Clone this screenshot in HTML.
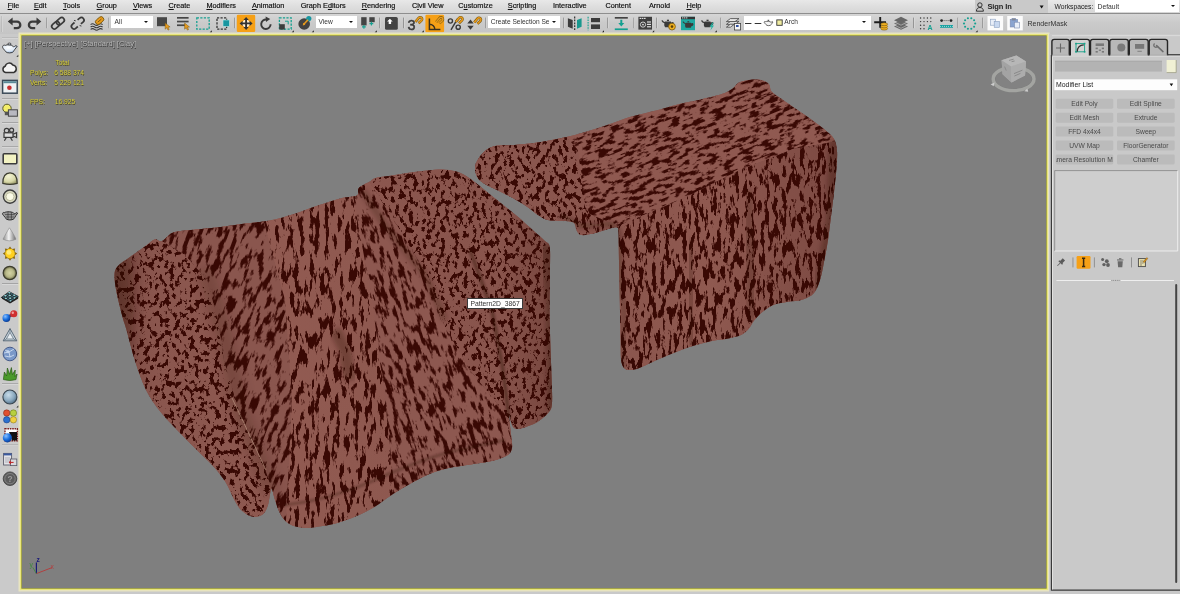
<!DOCTYPE html>
<html lang="en">
<head>
<meta charset="utf-8">
<title>3ds Max</title>
<style>
*{box-sizing:border-box;margin:0;padding:0}
html,body{width:1180px;height:594px;overflow:hidden;background:#c9c9c9;font-family:"Liberation Sans",sans-serif;font-size:7.3px;color:#1e1e1e}
#app{position:absolute;left:0;top:0;width:1180px;height:594px;overflow:hidden;filter:blur(.35px);will-change:transform;transform:translateZ(0)}
.abs{position:absolute}
/* menu bar */
#menubar{position:absolute;left:0;top:0;width:1180px;height:14px;background:linear-gradient(#e8e8e8,#dedede 50%,#d6d6d6);border-bottom:.9px solid #8e8e8e}
#menubar span.m{position:absolute;top:1.1px;height:10px;line-height:10px;white-space:nowrap;font-size:7.3px;color:#111;-webkit-text-stroke:.18px #111}
#menubar span.m u{text-decoration-thickness:.6px;text-underline-offset:.6px}
#signin{position:absolute;left:975px;top:0;width:73px;height:12.5px;background:#c9c9c9}
#ws{position:absolute;left:1094.5px;top:0;width:84px;height:12px;background:#fff}
/* toolbar */
#toolbar{position:absolute;left:0;top:14px;width:1180px;height:20px;background:linear-gradient(#d6d6d6,#cacaca 45%,#c5c5c5)}
.sep{position:absolute;top:3px;width:1px;height:13px;background:#8e8e8e}
.dd{position:absolute;background:#fff;height:12.2px;top:2.2px;font-size:6.6px;line-height:12.2px;color:#333;white-space:nowrap;overflow:hidden}
.dd i{position:absolute;right:3px;top:4.8px;width:0;height:0;border-left:2px solid transparent;border-right:2px solid transparent;border-top:2.7px solid #111}
.ic{position:absolute;top:0;height:20px}
/* viewport */
#vp{position:absolute;left:22.4px;top:35.6px;width:1023.4px;height:552.8px;background:#7f7f7f;box-shadow:0 0 0 .7px #85873a, 0 0 0 1.9px #eae774, 0 0 0 3.5px #e8e4c0}
/* left tool strip */
#strip{position:absolute;left:0;top:34px;width:20.5px;height:560px;background:#cacaca}
/* command panel */
#panel{position:absolute;left:1048.5px;top:34px;width:131.5px;height:560px;background:#c9c9c9}
.pbtn{position:absolute;height:10px;line-height:10.2px;font-size:6.7px;color:#4a4a4a;display:flex;justify-content:center;white-space:nowrap;overflow:hidden}
.vl,.vs{position:absolute;white-space:nowrap;line-height:9px;text-shadow:.5px .5px 0 #3a3a3a,-.4px -.4px 0 #555}
.vs{font-size:6.7px;color:#d8d046;text-shadow:.5px .5px 0 #4a4620,-.3px -.3px 0 #5a5630}
</style>
</head>
<body>
<div id="app">

<div id="menubar">
<span class="m" style="left:7.6px"><u>F</u>ile</span>
<span class="m" style="left:33.9px"><u>E</u>dit</span>
<span class="m" style="left:63px"><u>T</u>ools</span>
<span class="m" style="left:96.6px"><u>G</u>roup</span>
<span class="m" style="left:132.9px"><u>V</u>iews</span>
<span class="m" style="left:168.5px"><u>C</u>reate</span>
<span class="m" style="left:206.4px"><u>M</u>odifiers</span>
<span class="m" style="left:251.9px"><u>A</u>nimation</span>
<span class="m" style="left:300.7px">Graph E<u>d</u>itors</span>
<span class="m" style="left:361.7px"><u>R</u>endering</span>
<span class="m" style="left:411.9px">C<u>i</u>vil View</span>
<span class="m" style="left:458.3px">C<u>u</u>stomize</span>
<span class="m" style="left:507.8px"><u>S</u>cripting</span>
<span class="m" style="left:553px">Interactive</span>
<span class="m" style="left:605.4px">Content</span>
<span class="m" style="left:649px">Arnold</span>
<span class="m" style="left:686.4px"><u>H</u>elp</span>
<div id="signin"><svg class="abs" style="left:0;top:0" width="73" height="13" viewBox="0 0 73 13"><circle cx="4.9" cy="5" r="2.2" fill="none" stroke="#222" stroke-width=".9"/><path d="M1.4 11.2c0-2.4 1.5-3.7 3.5-3.7s3.5 1.3 3.5 3.7z" fill="none" stroke="#222" stroke-width=".9"/><path d="M64.6 5.6l4 0l-2 2.8z" fill="#111"/></svg><span class="abs" style="left:12.4px;top:2px;line-height:10px;font-size:7.5px;font-weight:bold;color:#222;white-space:nowrap;letter-spacing:-.1px">Sign In</span></div>
<span class="abs" style="left:1054.4px;top:2.2px;line-height:10px;font-size:6.75px;color:#222;white-space:nowrap">Workspaces:</span>
<div id="ws"><span class="abs" style="left:3px;top:2.1px;line-height:10px;font-size:6.8px;color:#333">Default</span><i class="abs" style="right:3.6px;top:5.4px;width:0;height:0;border-left:2px solid transparent;border-right:2px solid transparent;border-top:2.7px solid #111"></i></div>
</div>

<div id="toolbar">
<div class="dd" style="left:111.2px;width:42px;padding-left:3.4px">All<i style="right:5px"></i></div>
<div class="dd" style="left:316px;width:41px;padding-left:2.6px">View<i style="right:4px"></i></div>
<div class="dd" style="left:487.8px;width:72.5px;padding-left:3px">Create Selection Se<i style="right:4.6px"></i></div>
<div class="dd" style="left:743.5px;width:127.3px;height:13.4px;padding-left:40.8px">Arch<i style="right:5px"></i></div>
<div class="abs" style="left:1027.5px;top:4.3px;font-size:7px;line-height:12px;color:#333;white-space:nowrap">RenderMask</div>
</div>
<!--TB-->
<svg id="tbicons" class="abs" style="left:0;top:0" width="1180" height="34" viewBox="0 0 1180 34">
<rect x="1.6" y="16" width=".8" height="16" fill="#a9a9a9"/><rect x="2.4" y="16" width=".6" height="16" fill="#e4e4e4"/>
<g fill="none" stroke="#3a3a3a" stroke-width="2.3" stroke-linecap="butt"><path d="M11 21.6H17A3.3 3.3 0 0 1 17 28.2H13.8"/><path d="M38.2 21.6H32.2A3.3 3.3 0 0 0 32.2 28.2H35.2"/></g>
<path d="M7.8 21.6l4.8 -4v8z" fill="#3a3a3a"/><path d="M41.3 21.6l-4.8 -4v8z" fill="#3a3a3a"/>
<rect x="46.3" y="17.6" width=".9" height="10.6" fill="#8f8f8f"/><rect x="47.199999999999996" y="17.6" width=".6" height="10.6" fill="#dedede"/>
<rect x="108.4" y="17.6" width=".9" height="10.6" fill="#8f8f8f"/><rect x="109.30000000000001" y="17.6" width=".6" height="10.6" fill="#dedede"/>
<rect x="234.2" y="17.6" width=".9" height="10.6" fill="#8f8f8f"/><rect x="235.1" y="17.6" width=".6" height="10.6" fill="#dedede"/>
<rect x="379.0" y="17.6" width=".9" height="10.6" fill="#8f8f8f"/><rect x="379.9" y="17.6" width=".6" height="10.6" fill="#dedede"/>
<rect x="403.1" y="17.6" width=".9" height="10.6" fill="#8f8f8f"/><rect x="404.0" y="17.6" width=".6" height="10.6" fill="#dedede"/>
<rect x="485.0" y="17.6" width=".9" height="10.6" fill="#8f8f8f"/><rect x="485.9" y="17.6" width=".6" height="10.6" fill="#dedede"/>
<rect x="563.2" y="17.6" width=".9" height="10.6" fill="#8f8f8f"/><rect x="564.1" y="17.6" width=".6" height="10.6" fill="#dedede"/>
<rect x="607.2" y="17.6" width=".9" height="10.6" fill="#8f8f8f"/><rect x="608.1" y="17.6" width=".6" height="10.6" fill="#dedede"/>
<rect x="633.4" y="17.6" width=".9" height="10.6" fill="#8f8f8f"/><rect x="634.3" y="17.6" width=".6" height="10.6" fill="#dedede"/>
<rect x="656.0" y="17.6" width=".9" height="10.6" fill="#8f8f8f"/><rect x="656.9" y="17.6" width=".6" height="10.6" fill="#dedede"/>
<rect x="720.3" y="17.6" width=".9" height="10.6" fill="#8f8f8f"/><rect x="721.1999999999999" y="17.6" width=".6" height="10.6" fill="#dedede"/>
<rect x="913.1" y="17.6" width=".9" height="10.6" fill="#8f8f8f"/><rect x="914.0" y="17.6" width=".6" height="10.6" fill="#dedede"/>
<rect x="957.4" y="17.6" width=".9" height="10.6" fill="#8f8f8f"/><rect x="958.3" y="17.6" width=".6" height="10.6" fill="#dedede"/>
<rect x="982.2" y="17.6" width=".9" height="10.6" fill="#8f8f8f"/><rect x="983.1" y="17.6" width=".6" height="10.6" fill="#dedede"/>
<g transform="translate(58 23.2) rotate(-40)" fill="none" stroke="#3a3a3a" stroke-width="1.7"><rect x="-7.4" y="-2.6" width="8.6" height="5.2" rx="2.6"/><rect x="-1.2" y="-2.6" width="8.6" height="5.2" rx="2.6"/></g>
<g transform="translate(77.7 23.2) rotate(-40)" fill="none" stroke="#3a3a3a" stroke-width="1.7"><path d="M-2 -2.6H-4.8A2.6 2.6 0 0 0 -4.8 2.6H-2"/><path d="M2 -2.6H4.8A2.6 2.6 0 0 1 4.8 2.6H2"/><path d="M-1 -4.6L0 -3M1 4.6L0 3" stroke-width=".9"/></g>
<g fill="none" stroke="#3a3a3a" stroke-width="1.1"><path d="M90.6 24.6q2-1.6 4 0t4 0t4 0"/><path d="M90.6 27q2-1.6 4 0t4 0t4 0"/><path d="M90.6 29.4q2-1.6 4 0t4 0t4 0"/></g>
<g transform="translate(99.6 20.6) rotate(-40)"><rect x="-4.6" y="-2.6" width="9.2" height="5.2" rx="2.6" fill="#e89a1c" stroke="#7a5a10" stroke-width=".9"/><path d="M-2.4 0H2.4" stroke="#7a5a10" stroke-width=".9"/></g>
<rect x="157" y="17.2" width="10" height="9" fill="#464646"/><path d="M165.2 23l0 6.2l1.6 -1.5l1.2 2.4l1.2 -.6l-1.2 -2.3l2.1 -.2z" fill="#e89a1c" stroke="#7a5a10" stroke-width=".5"/>
<g fill="#464646"><rect x="177" y="17" width="11.6" height="1.7"/><rect x="177" y="20.7" width="11.6" height="1.7"/><rect x="177" y="24.4" width="8" height="1.7"/></g><path d="M184.6 23l0 6.2l1.6 -1.5l1.2 2.4l1.2 -.6l-1.2 -2.3l2.1 -.2z" fill="#e89a1c" stroke="#7a5a10" stroke-width=".5"/>
<rect x="196.8" y="17.9" width="12.4" height="11.2" fill="none" stroke="#14a090" stroke-width="1.3" stroke-dasharray="2.2 1.3"/><path d="M209.6 32.4l2.2 0l0 -2.2z" fill="#222"/>
<rect x="217" y="17.9" width="9.6" height="11.2" fill="none" stroke="#333" stroke-width="1.3" stroke-dasharray="2.2 1.3"/><rect x="223" y="20" width="6.4" height="6.4" fill="#1896a0" stroke="#bfe8e6" stroke-width=".6"/>
<rect x="236.8" y="14.8" width="18.4" height="17.2" rx="1.2" fill="#f6a016"/>
<path d="M246.1 18.2l5.2 5.2l-5.2 5.2l-5.2-5.2z" fill="#fff6e4" opacity=".92"/><g stroke="#333" stroke-width="1.9" fill="#333"><path d="M241.8 23.4H250.4M246.1 19V27.8" fill="none"/><path d="M239.6 23.4l3-2.7v5.4zM252.6 23.4l-3-2.7v5.4zM246.1 16.9l-2.7 3h5.4zM246.1 29.9l-2.7-3h5.4z" stroke="none"/></g>
<path d="M270.6 24.2A4.7 4.7 0 1 1 266.6 19.6" fill="none" stroke="#3a3a3a" stroke-width="1.9"/><path d="M265.6 16.4l4.6 2.6l-4.2 3z" fill="#3a3a3a"/>
<rect x="279.4" y="17.9" width="11.8" height="11.2" fill="none" stroke="#14a090" stroke-width="1.3" stroke-dasharray="2.2 1.3"/><rect x="279.2" y="24.2" width="5.6" height="5.4" fill="#3c3c3c"/><path d="M285 21.2h3.2v3.2" fill="none" stroke="#14a090" stroke-width="1"/><path d="M291.6 32.4l2.2 0l0 -2.2z" fill="#222"/>
<circle cx="304.2" cy="24" r="5.8" fill="#424242"/><circle cx="308.8" cy="18.6" r="2.6" fill="#1896a0"/><path d="M303.6 24.6L308 19.8" stroke="#e89a1c" stroke-width="1.5"/><path d="M302.8 25.6l.4-2.8l2.2 2z" fill="#e89a1c"/><path d="M311.6 32.4l2.2 0l0 -2.2z" fill="#222"/>
<rect x="361.2" y="17.2" width="5.4" height="8.2" fill="#444"/><rect x="369.3" y="17.2" width="5.4" height="5" fill="#444"/><path d="M362 26.9h3.8M363.9 25v3.8M369.5 23.6h3.8M371.4 21.7v3.8" stroke="#14a090" stroke-width="1.1"/><path d="M374.6 32.4l2.2 0l0 -2.2z" fill="#222"/>
<rect x="385" y="17" width="12.8" height="12.8" rx="1.6" fill="#444"/><path d="M389.9 18.8l2.8 2.6h-1.6v2.6h-2.4v-2.6h-1.6z" fill="#fff"/>
<text x="407.6" y="29.6" font-size="14.4" stroke="#3a3a3a" stroke-width=".5" fill="#3a3a3a" font-family="Liberation Sans,sans-serif">3</text><g transform="translate(414.6 15.6)"><path d="M0.8 6.2L4.2 2.2A1.9 1.9 0 0 1 7 4.8L4 7.6" fill="none" stroke="#7a5a10" stroke-width="2.6" stroke-linecap="butt"/><path d="M0.8 6.2L4.2 2.2A1.9 1.9 0 0 1 7 4.8L4 7.6" fill="none" stroke="#e89a1c" stroke-width="1.5"/></g><path d="M421.6 32.4l2.2 0l0 -2.2z" fill="#222"/>
<rect x="425.4" y="14.8" width="18.7" height="17.4" rx="1.2" fill="#f6a016"/>
<path d="M429.4 18.6V29.6H440.4M429.4 24.2A5.4 5.4 0 0 1 434.9 29.6" fill="none" stroke="#3a3020" stroke-width="1.5"/><g transform="translate(435.4 15.8)"><path d="M0.8 6.2L4.2 2.2A1.9 1.9 0 0 1 7 4.8L4 7.6" fill="none" stroke="#7a5a10" stroke-width="2.6" stroke-linecap="butt"/><path d="M0.8 6.2L4.2 2.2A1.9 1.9 0 0 1 7 4.8L4 7.6" fill="none" stroke="#e89a1c" stroke-width="1.5"/></g>
<g fill="none" stroke="#3a3a3a" stroke-width="1.4"><circle cx="450.4" cy="21" r="2.1"/><circle cx="458.2" cy="27.2" r="2.1"/><path d="M457.6 18.6L451 29.8"/></g><g transform="translate(455 15.6)"><path d="M0.8 6.2L4.2 2.2A1.9 1.9 0 0 1 7 4.8L4 7.6" fill="none" stroke="#7a5a10" stroke-width="2.6" stroke-linecap="butt"/><path d="M0.8 6.2L4.2 2.2A1.9 1.9 0 0 1 7 4.8L4 7.6" fill="none" stroke="#e89a1c" stroke-width="1.5"/></g>
<path d="M470.5 19.4l3.2 4h-6.4zM470.5 29.8l3.2-4h-6.4z" fill="#3a3a3a"/><g transform="translate(473.4 16.2)"><path d="M0.8 6.2L4.2 2.2A1.9 1.9 0 0 1 7 4.8L4 7.6" fill="none" stroke="#7a5a10" stroke-width="2.6" stroke-linecap="butt"/><path d="M0.8 6.2L4.2 2.2A1.9 1.9 0 0 1 7 4.8L4 7.6" fill="none" stroke="#e89a1c" stroke-width="1.5"/></g>
<path d="M567.9 18.2l4.8 1.9v8.6l-4.8-1.9z" fill="#3c3c3c"/><path d="M581.6 18.2l-4.6 1.9v8.6l4.6-1.9z" fill="#18988e"/><path d="M574.7 16.6V30.4" stroke="#222" stroke-width="1.1" stroke-dasharray="1.8 1.1"/>
<path d="M588.1 16.8V30.2" stroke="#14a090" stroke-width="1.1" stroke-dasharray="1.6 1"/><rect x="591" y="18" width="9" height="4.2" fill="#3c3c3c"/><rect x="591" y="24.4" width="9" height="4.6" fill="#3c3c3c"/><path d="M601.8 32.4l2.2 0l0 -2.2z" fill="#222"/>
<rect x="614.8" y="17.1" width="13" height="1.5" fill="#333"/><rect x="614.8" y="28.4" width="13" height="1.7" fill="#14a090"/><path d="M620.3 19.8h2v3.2h2l-3 3.4l-3-3.4h2z" fill="#14a090"/>
<rect x="638.4" y="16.8" width="13.6" height="12.8" fill="#3e3e3e"/><g fill="#ddd"><rect x="639.6" y="17.8" width="1.6" height="1.2"/><rect x="641.8" y="17.8" width="1.6" height="1.2"/><rect x="644" y="17.8" width="1.6" height="1.2"/><rect x="647" y="21.4" width="4" height="1.2"/><rect x="647" y="23.8" width="4" height="1.2"/><rect x="647" y="26.2" width="4" height="1.2"/></g><circle cx="643" cy="24.6" r="2.6" fill="none" stroke="#ddd" stroke-width=".9"/><circle cx="643" cy="24.6" r=".9" fill="#ddd"/><path d="M652 32.4l2.2 0l0 -2.2z" fill="#222"/>
<g transform="translate(661.4 19) scale(1.15)"><path d="M2.5 3.5C1 3 0.3 2.2 0 1.2L1.2 1C1.6 2 2.2 2.4 3 2.6L3.2 2.2L8.2 2.2L8.6 3C9.6 2.2 10.6 2.4 10.8 3.4C11 4.6 10 5.4 8.8 5.6L8.2 7.2L3.2 7.2L2.5 5.6Z" fill="#3a3a3a"/><rect x="4.8" y="0.6" width="1.8" height="1.2" fill="#3a3a3a"/></g><circle cx="672" cy="26.6" r="3.4" fill="#f0b020" stroke="#7a5a10" stroke-width=".8"/><circle cx="672" cy="26.6" r="1.3" fill="#5a4008"/>
<rect x="681" y="16.8" width="14" height="13.4" fill="#20a8a0"/><rect x="681" y="16.8" width="14" height="2.4" fill="#333"/><g fill="#ddd"><rect x="682" y="17.4" width="1.4" height="1"/><rect x="684" y="17.4" width="1.4" height="1"/><rect x="686" y="17.4" width="1.4" height="1"/></g><g transform="translate(682.6 20.6) scale(1.0)"><path d="M2.5 3.5C1 3 0.3 2.2 0 1.2L1.2 1C1.6 2 2.2 2.4 3 2.6L3.2 2.2L8.2 2.2L8.6 3C9.6 2.2 10.6 2.4 10.8 3.4C11 4.6 10 5.4 8.8 5.6L8.2 7.2L3.2 7.2L2.5 5.6Z" fill="#3a3a3a"/><rect x="4.8" y="0.6" width="1.8" height="1.2" fill="#3a3a3a"/></g>
<g transform="translate(701 19) scale(1.15)"><path d="M2.5 3.5C1 3 0.3 2.2 0 1.2L1.2 1C1.6 2 2.2 2.4 3 2.6L3.2 2.2L8.2 2.2L8.6 3C9.6 2.2 10.6 2.4 10.8 3.4C11 4.6 10 5.4 8.8 5.6L8.2 7.2L3.2 7.2L2.5 5.6Z" fill="#3a3a3a"/><rect x="4.8" y="0.6" width="1.8" height="1.2" fill="#3a3a3a"/></g><path d="M712.4 22.6l-2.8 4.2h2l-1.2 3.6l3.6-4.8h-2l1.6-3z" fill="#20b0a0"/><path d="M714.6 32.4l2.2 0l0 -2.2z" fill="#222"/>
<g fill="#e8e8e8" stroke="#444" stroke-width=".8"><path d="M726.4 24.4l4-3h8.6l-4 3z"/><path d="M726.4 21.6l4-3h8.6l-4 3z"/><path d="M726.4 27.2l4-3h4l-4 3z" /><rect x="734.4" y="23.4" width="6.2" height="6.6" fill="#f4f4f4"/><rect x="736" y="25" width="2.6" height="2" fill="#3050a0" stroke="none"/></g>
<path d="M745 23.5H751.4M754.7 23.5H761.3" stroke="#333" stroke-width="1"/><path d="M765.6 21.6C764.6 21.2 763.8 21.8 764.4 22.8L766 24.6C766.4 26 770.8 26 771.2 24.6L773 22L772.2 21.6L771 22.4C770.6 21.2 766.4 21.2 765.6 21.6Z" fill="#f4f4f4" stroke="#333" stroke-width=".7"/><rect x="767.6" y="19.8" width="1.6" height="1" fill="#333"/><rect x="776.8" y="19.9" width="5.4" height="5.4" fill="#f0eca0" stroke="#333" stroke-width=".9"/>
<path d="M874.2 22.2H886M880.2 17V27.8" stroke="#1c1c1c" stroke-width="1.9"/><g fill="#f0b020" stroke="#7a5a10" stroke-width=".6"><ellipse cx="884.2" cy="28.6" rx="3.4" ry="1.5"/><ellipse cx="884.2" cy="26.4" rx="3.4" ry="1.5"/><ellipse cx="884.2" cy="24.2" rx="3.4" ry="1.5"/></g>
<g fill="#666"><path d="M894 20.2l7-3.4l7 3.4l-7 3.4z"/><path d="M894 23.4l7-3.4l7 3.4l-7 3.4z" opacity=".9"/><path d="M894 26.4l7-3.4l7 3.4l-7 3.4z"/></g><g stroke="#c8c8c8" stroke-width=".6" fill="none"><path d="M894 21.8l7 3.4l7-3.4M894 24.9l7 3.4l7-3.4"/></g>
<circle cx="920.6" cy="18.0" r=".7" fill="#333"/><circle cx="920.6" cy="21.6" r=".7" fill="#333"/><circle cx="920.6" cy="25.2" r=".7" fill="#333"/><circle cx="920.6" cy="28.8" r=".7" fill="#333"/><circle cx="924.0" cy="18.0" r=".7" fill="#333"/><circle cx="924.0" cy="21.6" r=".7" fill="#333"/><circle cx="924.0" cy="25.2" r=".7" fill="#333"/><circle cx="924.0" cy="28.8" r=".7" fill="#333"/><circle cx="927.4" cy="18.0" r=".7" fill="#333"/><circle cx="927.4" cy="21.6" r=".7" fill="#333"/><circle cx="930.8" cy="18.0" r=".7" fill="#333"/><circle cx="930.8" cy="21.6" r=".7" fill="#333"/><text x="927.6" y="30.2" font-size="7" font-weight="bold" fill="#14a090" font-family="Liberation Sans,sans-serif">A</text>
<circle cx="941.6" cy="20.6" r="1.4" fill="#222"/><circle cx="951" cy="20.6" r="1.4" fill="#222"/><path d="M943.6 20.6H949" stroke="#222" stroke-width=".7" stroke-dasharray="1 1"/><rect x="940" y="25" width="13" height="2.8" fill="#18a0a0"/><path d="M940 26.4H953" stroke="#bfe8e6" stroke-width=".8" stroke-dasharray="1 1"/>
<circle cx="975.2" cy="23.5" r="1.05" fill="#14a090"/><circle cx="974.1" cy="26.8" r="1.05" fill="#14a090"/><circle cx="971.3" cy="28.8" r="1.05" fill="#14a090"/><circle cx="967.9" cy="28.8" r="1.05" fill="#14a090"/><circle cx="965.1" cy="26.8" r="1.05" fill="#14a090"/><circle cx="964.0" cy="23.5" r="1.05" fill="#14a090"/><circle cx="965.1" cy="20.2" r="1.05" fill="#14a090"/><circle cx="967.9" cy="18.2" r="1.05" fill="#14a090"/><circle cx="971.3" cy="18.2" r="1.05" fill="#14a090"/><circle cx="974.1" cy="20.2" r="1.05" fill="#14a090"/><path d="M975.4 32.4l2.2 0l0 -2.2z" fill="#222"/>
<rect x="987.5" y="16" width="15.6" height="14.4" fill="#fbfbfb"/><rect x="1007.2" y="16" width="15.6" height="14.4" fill="#fbfbfb"/>
<g stroke="#8aa0c0" stroke-width=".6"><rect x="990.6" y="19.2" width="5" height="6" fill="#e8eef8"/><rect x="994.2" y="21.4" width="5.2" height="6" fill="#c8d8f0"/></g>
<g stroke="#7a8ab0" stroke-width=".6"><rect x="1010.2" y="19.4" width="7.4" height="7.6" fill="#8aa4d0"/><rect x="1012" y="18.4" width="3.6" height="1.8" fill="#888"/><rect x="1014.4" y="22.2" width="5.2" height="5.8" fill="#e8eef8"/></g>
</svg>
<!--/TB-->

<div id="strip"></div>
<!--STRIP-->
<svg id="stripicons" class="abs" style="left:0;top:0" width="21" height="594" viewBox="0 0 21 594">
<rect x="2" y="37.6" width="16" height=".8" fill="#a6a6a6"/><rect x="2" y="38.4" width="16" height=".6" fill="#e6e6e6"/>
<rect x="2" y="98.1" width="16.5" height=".8" fill="#9a9a9a"/><rect x="2" y="98.9" width="16.5" height=".6" fill="#e2e2e2"/>
<rect x="2" y="122.19999999999999" width="16.5" height=".8" fill="#9a9a9a"/><rect x="2" y="123.0" width="16.5" height=".6" fill="#e2e2e2"/>
<rect x="2" y="146.29999999999998" width="16.5" height=".8" fill="#9a9a9a"/><rect x="2" y="147.1" width="16.5" height=".6" fill="#e2e2e2"/>
<rect x="2" y="283.20000000000005" width="16.5" height=".8" fill="#9a9a9a"/><rect x="2" y="284.0" width="16.5" height=".6" fill="#e2e2e2"/>
<rect x="2" y="383.1" width="16.5" height=".8" fill="#9a9a9a"/><rect x="2" y="383.9" width="16.5" height=".6" fill="#e2e2e2"/>
<rect x="2" y="444.6" width="16.5" height=".8" fill="#9a9a9a"/><rect x="2" y="445.4" width="16.5" height=".6" fill="#e2e2e2"/>
<defs>
<radialGradient id="gTea" cx=".4" cy=".35" r=".7"><stop offset="0" stop-color="#fff"/><stop offset=".6" stop-color="#dfeaf6"/><stop offset="1" stop-color="#7aa0d0"/></radialGradient>
<radialGradient id="gDome" cx=".4" cy=".3" r=".8"><stop offset="0" stop-color="#f4f4d4"/><stop offset=".6" stop-color="#d8d8a8"/><stop offset="1" stop-color="#8a8a58"/></radialGradient>
<radialGradient id="gOlive" cx=".5" cy=".5" r=".5"><stop offset="0" stop-color="#d4d4a4"/><stop offset=".6" stop-color="#b8b888"/><stop offset="1" stop-color="#6c6c48"/></radialGradient>
<radialGradient id="gSph" cx=".4" cy=".35" r=".7"><stop offset="0" stop-color="#c8dcea"/><stop offset=".6" stop-color="#8aa8be"/><stop offset="1" stop-color="#4a6880"/></radialGradient>
<radialGradient id="gBlue" cx=".35" cy=".3" r=".8"><stop offset="0" stop-color="#8ac0ff"/><stop offset=".5" stop-color="#1a70e0"/><stop offset="1" stop-color="#083080"/></radialGradient>
<linearGradient id="gCone" x1="0" y1="0" x2="1" y2="0"><stop offset="0" stop-color="#8a8a8a"/><stop offset=".45" stop-color="#f4f4f4"/><stop offset="1" stop-color="#6a6a6a"/></linearGradient>
</defs>
<g stroke="#333" stroke-width=".9" fill="url(#gTea)"><path d="M5.6 45.4C3 44.4 1.6 46.6 3.4 48.8C4.4 50 5 50.6 5.6 51.6C6.6 53.4 12.8 53.4 13.6 51.4C14.2 50 15.6 48.4 17.2 46.4L15.8 45.6C14.6 46.6 14 46.8 13.2 46.6C12.4 44.4 6.4 44.4 5.6 45.4Z"/><ellipse cx="9.4" cy="44" rx="1.6" ry=".9"/></g><path d="M18.6 56.8l0-2.2l-2.2 2.2z" fill="#222"/>
<path d="M5.6 72.4A3.2 3.2 0 0 1 5.2 66.2A4.2 4.2 0 0 1 12.8 65A3.9 3.9 0 0 1 14 72.4Z" fill="#f4f4f4" stroke="#333" stroke-width="1.5"/>
<rect x="2.6" y="80.4" width="14.6" height="12.8" fill="#eef2f4" stroke="#3a4a58" stroke-width="1.5"/><rect x="3.4" y="81.2" width="13" height="2" fill="#5a8a98"/><circle cx="9.4" cy="87.8" r="2.3" fill="#c83030"/>
<circle cx="7" cy="108.4" r="4.2" fill="#f4ee6a" stroke="#5a5a2a" stroke-width="1"/><rect x="4.8" y="111.6" width="4" height="3.6" fill="#555"/><rect x="8.4" y="109.8" width="9" height="6.4" fill="#b8b8c0" stroke="#444" stroke-width="1"/>
<g fill="none" stroke="#3a3a3a" stroke-width="1.2"><circle cx="6.6" cy="130.6" r="2.3"/><circle cx="11.6" cy="130.2" r="2"/><rect x="4" y="132.8" width="9" height="4.6" fill="#ddd"/><path d="M13 134.2l3.6-1.6v5l-3.6-1.6M6.4 137.4l-2 3.4M10.4 137.4l2 3.4"/></g>
<rect x="3.2" y="153.8" width="13.6" height="10" rx="1" fill="#f2f2c2" stroke="#3c3c3c" stroke-width="1.6"/>
<path d="M2.8 183.4C2.8 176 5.6 172.8 10 172.8S17.2 176 17.2 183.4Q10 185.4 2.8 183.4Z" fill="url(#gDome)" stroke="#3c3c30" stroke-width="1.2"/>
<circle cx="10" cy="196.6" r="6.6" fill="#d8d8c0" stroke="#3c3c3c" stroke-width="1.4"/><circle cx="10" cy="196.6" r="4" fill="#fafae6" stroke="#9a9a7a" stroke-width=".6"/>
<g fill="#9a9a9a" stroke="#2e2e2e" stroke-width="1"><path d="M4.6 212.6C2.4 212 1.8 214 3.6 215.6L5.2 217.4C5.8 220.8 14 220.8 14.8 217.4C15.4 216 16.6 214.6 17.6 213.2L16.4 212.6C15.4 213.6 14.8 213.8 14.2 213.6C13 211.4 6 211.4 4.6 212.6Z"/><path d="M5 214.6H14.6M6 217H14M8 212.4V220M11.4 212.4V220" stroke-width=".6"/></g>
<path d="M9.4 227.8C7.4 231 4.6 236 3 239.2Q9.4 242.4 16 239.2C14.6 236 11.8 231 9.4 227.8Z" fill="url(#gCone)" stroke="#8a8a8a" stroke-width=".6"/>
<polygon points="17.2,253.6 14.6,255.5 15.1,258.7 11.9,258.2 10.0,260.8 8.1,258.2 4.9,258.7 5.4,255.5 2.8,253.6 5.4,251.7 4.9,248.5 8.1,249.0 10.0,246.4 11.9,249.0 15.1,248.5 14.6,251.7" fill="#8a6a10"/><circle cx="10" cy="253.6" r="4.8" fill="#ffd020"/><circle cx="9" cy="252.4" r="2.4" fill="#fff08a" opacity=".8"/>
<circle cx="9.8" cy="273" r="6.6" fill="url(#gOlive)" stroke="#3c3c2c" stroke-width="1.3"/>
<g transform="translate(10 297) scale(1 .62) rotate(40)"><rect x="-6.6" y="-6.6" width="13.2" height="13.2" fill="#222"/><rect x="-6.0" y="-6.0" width="2.3" height="2.3" fill="#8ad0d8"/><rect x="-6.0" y="-2.9" width="2.3" height="2.3" fill="#3a6a78"/><rect x="-6.0" y="0.2" width="2.3" height="2.3" fill="#8ad0d8"/><rect x="-6.0" y="3.3" width="2.3" height="2.3" fill="#3a6a78"/><rect x="-2.9" y="-6.0" width="2.3" height="2.3" fill="#3a6a78"/><rect x="-2.9" y="-2.9" width="2.3" height="2.3" fill="#8ad0d8"/><rect x="-2.9" y="0.2" width="2.3" height="2.3" fill="#3a6a78"/><rect x="-2.9" y="3.3" width="2.3" height="2.3" fill="#8ad0d8"/><rect x="0.2" y="-6.0" width="2.3" height="2.3" fill="#8ad0d8"/><rect x="0.2" y="-2.9" width="2.3" height="2.3" fill="#3a6a78"/><rect x="0.2" y="0.2" width="2.3" height="2.3" fill="#8ad0d8"/><rect x="0.2" y="3.3" width="2.3" height="2.3" fill="#3a6a78"/><rect x="3.3" y="-6.0" width="2.3" height="2.3" fill="#3a6a78"/><rect x="3.3" y="-2.9" width="2.3" height="2.3" fill="#8ad0d8"/><rect x="3.3" y="0.2" width="2.3" height="2.3" fill="#3a6a78"/><rect x="3.3" y="3.3" width="2.3" height="2.3" fill="#8ad0d8"/></g><path d="M2 297l8 5l8.4-5.4v1.8l-8.4 5.2l-8-4.8z" fill="#222"/>
<path d="M6.6 317.6L13.6 314" stroke="#6a3a5a" stroke-width="3"/><circle cx="6.4" cy="318" r="3.9" fill="url(#gBlue)"/><circle cx="13.8" cy="313.8" r="3.5" fill="#d03030"/><circle cx="12.8" cy="312.8" r="1.2" fill="#f0a0a0"/>
<g fill="#c8d4dc" stroke="#5a6a78" stroke-width="1"><path d="M10 328.6L16.8 340.8H3.2Z"/><path d="M10 332.4L13.6 339H6.4ZM10 328.6V332.4M3.2 340.8L6.4 339M16.8 340.8L13.6 339" fill="#e8eef2" stroke-width=".7"/></g>
<circle cx="9.9" cy="354" r="6.8" fill="#7a98c8" stroke="#3a5080" stroke-width=".9"/><path d="M5 350l4 2l5-3M9 352l1 5l4-2M5 356l5 1M4 353l5-1" stroke="#d8e4f4" stroke-width=".8" fill="none"/><circle cx="8" cy="351.6" r="1.6" fill="#c8d8f0" opacity=".8"/>
<path d="M3.4 379.6L4.4 372L6.6 376L7.4 368L9.6 374.4L11.4 367.6L12.4 374.6L15.2 370L15 376.6L17 374L16 379.6Q10 381.4 3.4 379.6Z" fill="#4a9a2a" stroke="#2a5a14" stroke-width=".7"/>
<circle cx="9.9" cy="397" r="7" fill="url(#gSph)" stroke="#3a4650" stroke-width="1.1"/><path d="M18.6 407.4l0-2.2l-2.2 2.2z" fill="#222"/>
<circle cx="6.7" cy="413" r="3.2" fill="#e05030" stroke="#702010" stroke-width=".5"/><circle cx="13.4" cy="413" r="3.2" fill="#b8d040" stroke="#5a6a10" stroke-width=".5"/><circle cx="6.7" cy="419.8" r="3.2" fill="#2a70d0" stroke="#103070" stroke-width=".5"/><circle cx="13.4" cy="419.8" r="3.2" fill="#f0d040" stroke="#7a6a10" stroke-width=".5"/>
<rect x="5" y="428.8" width="12.4" height="12" fill="#fff" stroke="#7a2020" stroke-width="1.4" stroke-dasharray="1.6 .8"/><path d="M9 432h8v8.4h-5z" fill="#111"/><circle cx="7.4" cy="437.8" r="4.6" fill="url(#gBlue)"/>
<rect x="3.6" y="453.4" width="8" height="11.6" fill="#e4e4e8" stroke="#5a5a68" stroke-width=".9"/><rect x="3.6" y="453.4" width="8" height="2" fill="#3a5aa0"/><path d="M5 458h5M5 460h5M5 462h5" stroke="#8a8a98" stroke-width=".6"/><rect x="10.4" y="459" width="6.4" height="6.6" fill="#d8d8dc" stroke="#5a5a68" stroke-width=".8"/><path d="M9 462.4h4.6M9 462.4l2-1.6M9 462.4l2 1.6" stroke="#c02020" stroke-width="1"/>
<circle cx="10" cy="478.7" r="6.8" fill="#5c5c5c" stroke="#3a3a3a" stroke-width=".8"/><circle cx="10" cy="478.7" r="5.2" fill="none" stroke="#8a8a8a" stroke-width=".8"/><text x="10" y="481.6" font-size="8.4" font-weight="bold" fill="#9a9a9a" text-anchor="middle" font-family="Liberation Sans,sans-serif">?</text>
</svg>
<!--/STRIP-->

<div id="vp"></div>

<!--SCENE-->
<svg id="scene" class="abs" style="left:0;top:0" width="1180" height="594" viewBox="0 0 1180 594">
<defs>
<clipPath id="vpclip"><rect x="22.5" y="35.7" width="1023.5" height="553"/></clipPath>
<path id="clothL" d="M114.5 275.0C114.7 270.5 115.4 269.0 118.0 266.0C120.6 263.0 125.4 260.3 130.0 257.0C134.6 253.7 141.4 248.9 145.5 246.0C149.6 243.1 151.8 240.2 154.5 239.4C157.2 238.6 159.0 242.1 162.0 241.0C165.0 239.9 167.9 234.5 172.7 232.7C177.5 230.9 182.9 230.9 191.0 230.0C199.1 229.1 211.9 228.1 221.0 227.0C230.1 225.9 237.4 224.7 245.5 223.6C253.6 222.5 261.6 222.2 269.7 220.6C277.8 219.0 285.9 216.5 294.0 214.0C302.1 211.5 310.0 208.2 318.0 205.5C326.0 202.8 335.5 199.7 342.0 198.0C348.5 196.3 354.2 197.2 357.0 195.5C359.8 193.8 356.7 190.3 358.8 188.0C360.9 185.7 366.6 183.5 369.4 181.8C372.2 180.1 372.0 179.0 375.5 178.0C379.0 177.0 385.1 176.7 390.6 175.8C396.2 174.9 402.7 173.6 408.8 172.7C414.9 171.8 421.0 171.1 427.0 170.6C433.0 170.1 439.5 169.3 445.0 169.7C450.5 170.0 455.4 170.9 460.0 172.7C464.6 174.5 467.8 177.0 472.4 180.3C477.0 183.6 482.6 188.4 487.6 192.4C492.7 196.4 497.6 200.4 502.7 204.5C507.8 208.6 512.9 212.4 517.9 216.7C522.9 221.0 528.5 226.2 533.0 230.3C537.5 234.4 542.2 238.2 545.0 241.0C547.8 243.8 548.9 242.0 549.7 247.0C550.5 252.0 550.0 258.8 550.0 271.0C550.0 283.2 549.5 302.6 549.7 320.0C550.0 337.4 551.1 361.8 551.5 375.6C551.9 389.4 552.5 396.8 552.0 403.0C551.5 409.2 550.9 409.5 548.5 412.6C546.1 415.8 541.7 419.3 537.4 421.9C533.1 424.5 526.3 426.9 522.6 428.0C518.9 429.1 516.9 429.2 515.0 428.5C513.1 427.8 512.5 425.9 511.5 423.7C510.5 421.4 509.0 412.5 509.0 415.0C509.0 417.5 511.0 433.0 511.5 438.5C512.0 444.0 512.6 445.1 512.0 447.8C511.4 450.6 511.0 452.9 507.8 455.0C504.6 457.1 499.2 459.1 493.0 460.7C486.8 462.3 478.1 463.2 470.7 464.4C463.3 465.6 455.3 466.4 448.5 468.0C441.7 469.6 436.2 471.2 430.0 473.7C423.8 476.2 417.7 479.6 411.5 483.0C405.3 486.4 399.2 490.0 393.0 494.0C386.8 498.0 380.6 503.3 374.4 507.0C368.2 510.7 362.2 513.6 356.0 516.3C349.8 519.0 342.9 521.4 337.4 523.0C331.8 524.6 328.1 525.2 322.7 526.0C317.3 526.8 310.6 528.4 305.0 528.0C299.4 527.6 293.1 526.1 289.0 523.7C284.9 521.3 282.6 517.8 280.3 513.8C278.0 509.8 276.5 503.8 275.0 499.7C273.5 495.6 272.6 488.1 271.4 489.0C270.2 489.9 269.5 500.8 268.0 505.0C266.5 509.2 265.3 512.6 262.6 514.5C259.9 516.4 255.5 517.3 252.0 516.6C248.5 515.9 244.3 513.1 241.4 510.3C238.5 507.5 237.0 504.4 234.3 499.7C231.7 495.0 229.1 487.6 225.5 482.0C221.9 476.4 218.0 471.6 213.0 466.0C208.0 460.4 201.3 454.3 195.4 448.4C189.5 442.5 183.7 436.9 177.8 430.7C171.9 424.5 165.3 418.1 160.0 411.3C154.7 404.5 150.1 398.2 146.0 390.0C141.9 381.8 138.6 371.8 135.3 361.8C132.1 351.8 128.6 337.4 126.5 330.0C124.4 322.6 124.3 323.8 122.7 317.6C121.1 311.4 118.1 300.1 116.7 293.0C115.3 285.9 114.3 279.5 114.5 275.0Z"/>
<path id="clothR" d="M475.0 167.0C475.2 164.2 476.2 162.2 478.0 159.4C479.8 156.6 482.7 152.6 485.8 150.3C488.9 148.0 491.6 146.7 496.4 145.8C501.2 144.9 507.9 145.5 514.5 145.0C521.1 144.5 528.7 143.7 535.8 142.7C542.9 141.7 550.5 140.3 557.0 139.0C563.5 137.7 569.5 136.4 575.0 135.0C580.5 133.6 584.4 132.3 590.0 130.6C595.6 128.8 601.9 126.8 608.5 124.5C615.1 122.2 623.1 119.0 629.7 117.0C636.3 115.0 643.2 113.6 647.9 112.4C652.6 111.2 652.8 111.4 658.0 110.0C663.2 108.6 672.3 105.8 679.4 104.0C686.5 102.2 693.5 101.1 700.6 99.4C707.7 97.7 716.5 95.8 721.8 94.0C727.1 92.2 729.6 90.7 732.4 88.8C735.2 86.9 735.7 84.2 738.5 82.7C741.3 81.2 745.2 80.5 749.0 80.0C752.8 79.5 757.7 79.3 761.0 80.0C764.3 80.7 767.0 82.0 768.8 84.0C770.6 86.0 769.5 89.2 771.8 91.8C774.1 94.4 778.1 96.4 782.4 99.4C786.7 102.4 792.5 106.5 797.6 110.0C802.7 113.5 808.2 117.3 812.7 120.6C817.2 123.9 821.3 126.7 824.8 129.7C828.3 132.7 831.9 135.2 833.9 138.8C835.9 142.4 836.6 146.0 837.0 151.0C837.4 156.0 836.9 161.9 836.4 169.0C835.9 176.1 834.8 185.2 833.9 193.3C833.0 201.4 831.9 209.8 830.9 217.6C829.9 225.4 829.1 232.6 828.0 240.0C826.9 247.4 825.3 255.3 824.0 262.0C822.7 268.7 821.7 274.8 820.0 280.0C818.3 285.2 816.8 289.8 814.0 293.0C811.2 296.2 807.4 297.9 803.0 299.4C798.6 300.9 792.7 300.9 787.9 301.8C783.1 302.7 778.0 303.3 774.0 304.8C770.0 306.3 766.9 308.5 763.6 311.0C760.4 313.5 757.0 317.0 754.5 320.0C752.0 323.0 750.8 326.5 748.5 329.0C746.2 331.5 744.6 333.4 741.0 335.0C737.4 336.6 731.8 337.8 727.0 338.8C722.2 339.8 717.0 340.0 712.0 341.0C707.0 342.0 702.0 343.4 697.0 344.8C692.0 346.2 686.8 347.9 681.8 349.7C676.8 351.5 671.8 353.7 666.7 355.8C661.7 357.9 656.0 360.4 651.5 362.4C647.0 364.4 643.0 366.6 639.4 367.9C635.8 369.2 632.6 370.0 630.0 370.0C627.4 370.0 625.5 369.7 624.0 367.9C622.5 366.1 621.6 363.9 621.0 359.4C620.4 354.9 620.8 349.1 620.6 341.0C620.4 332.9 620.2 321.1 620.0 311.0C619.8 300.9 619.6 290.8 619.4 280.6C619.2 270.4 618.9 258.1 618.8 250.0C618.6 241.9 618.8 235.8 618.5 232.0C618.2 228.2 618.7 228.0 617.0 227.5C615.3 227.0 612.5 228.0 608.5 229.0C604.5 230.0 597.9 232.6 593.3 233.6C588.7 234.6 583.8 235.5 581.0 235.0C578.2 234.5 577.9 232.7 576.7 230.6C575.5 228.5 575.9 224.1 573.6 222.5C571.3 220.9 567.3 221.4 563.0 221.0C558.7 220.6 551.9 220.9 547.9 220.0C543.9 219.1 542.3 217.8 538.8 215.5C535.3 213.2 531.2 209.4 526.7 206.4C522.2 203.4 516.5 200.1 511.5 197.3C506.4 194.5 501.2 192.1 496.4 189.7C491.6 187.3 486.0 185.0 482.7 182.7C479.4 180.4 478.0 178.6 476.7 176.0C475.4 173.4 474.8 169.8 475.0 167.0Z"/>
<clipPath id="cl"><use href="#clothL"/></clipPath>
<clipPath id="cr"><use href="#clothR"/></clipPath>
<clipPath id="lSleeve"><path d="M100 225L160 240L185 255L207 280L218 321L224 361L238 408L264 466L272 490L272 535L100 535Z"/></clipPath>
<clipPath id="lBody"><path d="M160 240L185 255L207 280L218 321L224 361L238 408L264 466L272 490L272 535L520 535L512 440L504 412L470 370L441 320L430 280L400 230L369 181L357 160L162 200Z"/></clipPath>
<clipPath id="lBodyL"><path d="M150 200L262 215L285 300L292 400L285 540L150 540Z"/></clipPath>
<clipPath id="lBodyR"><path d="M352 190L372 300L385 400L400 540L560 540L560 190Z"/></clipPath>
<clipPath id="lRight"><path d="M357 160L369 181L400 230L430 280L441 320L470 370L504 412L512 440L520 470L560 470L560 160Z"/></clipPath>
<clipPath id="rTop"><path d="M573 222L580 210L618 226L682 199L738 171L793 149L838 141L838 70L470 70L470 200L547 222Z"/></clipPath>
<clipPath id="rFlap"><path d="M470 140L560 130L578 150L584 200L600 240L470 240Z"/></clipPath>
<clipPath id="rFront"><path d="M573 222L580 210L618 226L682 199L738 171L793 149L838 141L845 310L620 380L600 240Z"/></clipPath>
<filter id="fStreak" x="0" y="0" width="100%" height="100%" color-interpolation-filters="sRGB">
<feTurbulence type="fractalNoise" baseFrequency="0.2 0.06" numOctaves="4" seed="11" result="n"/>
<feColorMatrix in="n" type="matrix" values="0 0 0 0 0.225  0 0 0 0 0.035  0 0 0 0 0.015  12 0 0 0 -6.3" result="s"/>
<feGaussianBlur in="s" stdDeviation="0.38" result="sb"/>
<feComposite in="sb" in2="SourceGraphic" operator="in" result="sc"/>
<feMerge><feMergeNode in="SourceGraphic"/><feMergeNode in="sc"/></feMerge>
</filter>
<filter id="fStreakB" x="0" y="0" width="100%" height="100%" color-interpolation-filters="sRGB">
<feTurbulence type="fractalNoise" baseFrequency="0.2 0.06" numOctaves="4" seed="29" result="n"/>
<feColorMatrix in="n" type="matrix" values="0 0 0 0 0.225  0 0 0 0 0.035  0 0 0 0 0.015  12 0 0 0 -6.2" result="s"/>
<feGaussianBlur in="s" stdDeviation="0.38" result="sb"/>
<feComposite in="sb" in2="SourceGraphic" operator="in" result="sc"/>
<feMerge><feMergeNode in="SourceGraphic"/><feMergeNode in="sc"/></feMerge>
</filter>
<filter id="fStreakC" x="0" y="0" width="100%" height="100%" color-interpolation-filters="sRGB">
<feTurbulence type="fractalNoise" baseFrequency="0.21 0.065" numOctaves="4" seed="41" result="n"/>
<feColorMatrix in="n" type="matrix" values="0 0 0 0 0.225  0 0 0 0 0.035  0 0 0 0 0.015  12 0 0 0 -6.2" result="s"/>
<feGaussianBlur in="s" stdDeviation="0.38" result="sb"/>
<feComposite in="sb" in2="SourceGraphic" operator="in" result="sc"/>
<feMerge><feMergeNode in="SourceGraphic"/><feMergeNode in="sc"/></feMerge>
</filter>
<filter id="fSpeck" x="0" y="0" width="100%" height="100%" color-interpolation-filters="sRGB">
<feTurbulence type="fractalNoise" baseFrequency="0.2 0.16" numOctaves="4" seed="5" result="n"/>
<feColorMatrix in="n" type="matrix" values="0 0 0 0 0.225  0 0 0 0 0.035  0 0 0 0 0.015  12 0 0 0 -6.4" result="s"/>
<feGaussianBlur in="s" stdDeviation="0.42" result="sb"/>
<feComposite in="sb" in2="SourceGraphic" operator="in" result="sc"/>
<feMerge><feMergeNode in="SourceGraphic"/><feMergeNode in="sc"/></feMerge>
</filter>
<filter id="fSpeck2" x="0" y="0" width="100%" height="100%" color-interpolation-filters="sRGB">
<feTurbulence type="fractalNoise" baseFrequency="0.22 0.15" numOctaves="4" seed="21" result="n"/>
<feColorMatrix in="n" type="matrix" values="0 0 0 0 0.225  0 0 0 0 0.035  0 0 0 0 0.015  12 0 0 0 -6.35" result="s"/>
<feGaussianBlur in="s" stdDeviation="0.42" result="sb"/>
<feComposite in="sb" in2="SourceGraphic" operator="in" result="sc"/>
<feMerge><feMergeNode in="SourceGraphic"/><feMergeNode in="sc"/></feMerge>
</filter>
<filter id="fDiag" x="0" y="0" width="100%" height="100%" color-interpolation-filters="sRGB">
<feTurbulence type="fractalNoise" baseFrequency="0.09 0.27" numOctaves="4" seed="3" result="n"/>
<feColorMatrix in="n" type="matrix" values="0 0 0 0 0.225  0 0 0 0 0.035  0 0 0 0 0.015  12 0 0 0 -6.15" result="s"/>
<feGaussianBlur in="s" stdDeviation="0.38" result="sb"/>
<feComposite in="sb" in2="SourceGraphic" operator="in" result="sc"/>
<feMerge><feMergeNode in="SourceGraphic"/><feMergeNode in="sc"/></feMerge>
</filter>
<filter id="fStreakR" x="0" y="0" width="100%" height="100%" color-interpolation-filters="sRGB">
<feTurbulence type="fractalNoise" baseFrequency="0.23 0.075" numOctaves="4" seed="17" result="n"/>
<feColorMatrix in="n" type="matrix" values="0 0 0 0 0.225  0 0 0 0 0.035  0 0 0 0 0.015  12 0 0 0 -6.1" result="s"/>
<feGaussianBlur in="s" stdDeviation="0.38" result="sb"/>
<feComposite in="sb" in2="SourceGraphic" operator="in" result="sc"/>
<feMerge><feMergeNode in="SourceGraphic"/><feMergeNode in="sc"/></feMerge>
</filter>
<linearGradient id="gLs" x1="0" y1="0" x2="1" y2="0"><stop offset="0" stop-color="#74443c"/><stop offset=".3" stop-color="#8a564e"/><stop offset="1" stop-color="#8e5950"/></linearGradient>
<linearGradient id="gLb" x1="0" y1="0" x2="1" y2="0"><stop offset="0" stop-color="#824e46"/><stop offset=".25" stop-color="#925b52"/><stop offset=".55" stop-color="#8f5950"/><stop offset="1" stop-color="#8a564e"/></linearGradient>
<linearGradient id="gLr" x1="0" y1="0" x2="1" y2="0"><stop offset="0" stop-color="#8c574f"/><stop offset=".7" stop-color="#88544c"/><stop offset="1" stop-color="#74443c"/></linearGradient>
<linearGradient id="gRt" x1="0" y1="1" x2="1" y2="0"><stop offset="0" stop-color="#8b564e"/><stop offset="1" stop-color="#935c53"/></linearGradient>
<linearGradient id="gRf" x1="0" y1="0" x2="1" y2="0"><stop offset="0" stop-color="#88544c"/><stop offset=".5" stop-color="#8f5950"/><stop offset="1" stop-color="#7a4841"/></linearGradient>
<filter id="b6" x="-30%" y="-30%" width="160%" height="160%"><feGaussianBlur stdDeviation="6"/></filter>
<filter id="b3" x="-30%" y="-30%" width="160%" height="160%"><feGaussianBlur stdDeviation="2.5"/></filter>
<filter id="b1" x="-30%" y="-30%" width="160%" height="160%"><feGaussianBlur stdDeviation="1"/></filter>
</defs>
<g clip-path="url(#vpclip)">
<g clip-path="url(#cl)">
<rect x="100" y="160" width="470" height="380" fill="#80504a"/>
<g clip-path="url(#lBody)"><rect x="150" y="160" width="380" height="380" fill="url(#gLb)" filter="url(#fStreak)"/>
<g clip-path="url(#lBodyL)"><g transform="rotate(20 230 350)"><rect x="60" y="120" width="360" height="480" fill="#8a564e" filter="url(#fStreakB)"/></g></g>
<g clip-path="url(#lBodyR)"><g transform="rotate(-17 430 380)"><rect x="260" y="140" width="360" height="480" fill="#8d5850" filter="url(#fStreakC)"/></g></g>
</g>
<g clip-path="url(#lSleeve)"><rect x="100" y="220" width="180" height="320" fill="url(#gLs)" filter="url(#fSpeck)"/></g>
<g clip-path="url(#lRight)"><rect x="350" y="160" width="215" height="320" fill="url(#gLr)" filter="url(#fSpeck2)"/></g>
<g fill="#2a0a06" stroke="#2a0a06">
<ellipse cx="118" cy="300" rx="16" ry="75" opacity=".32" filter="url(#b6)" stroke="none"/>
<path d="M205 268L224 335L240 410L272 492" fill="none" stroke-width="16" opacity=".2" filter="url(#b6)"/>
<path d="M546 245L553 300L554 410" fill="none" stroke-width="14" opacity=".3" filter="url(#b3)"/>
<path d="M470 250L492 310L503 370L509 418" fill="none" stroke-width="4" opacity=".4" filter="url(#b1)"/>
<path d="M362 190L385 225L425 275L445 320" fill="none" stroke-width="7" opacity=".25" filter="url(#b3)"/>
<path d="M335 330L345 350L350 380" fill="none" stroke-width="12" opacity=".3" filter="url(#b3)"/>
<path d="M285 505Q330 500 375 480T450 452L505 440" fill="none" stroke-width="3" opacity=".3" filter="url(#b1)"/>
</g>
<path d="M232 398L250 436L266 470" fill="none" stroke="#d8b8a0" stroke-width=".9" opacity=".5"/>
</g>
<g clip-path="url(#cr)">
<rect x="470" y="70" width="380" height="310" fill="#80504a"/>
<g clip-path="url(#rTop)"><g transform="rotate(-22 650 150)"><rect x="420" y="0" width="480" height="330" fill="url(#gRt)" filter="url(#fDiag)"/></g></g>
<g clip-path="url(#rFlap)"><rect x="470" y="130" width="135" height="112" fill="#8a564e" filter="url(#fSpeck2)"/></g>
<g clip-path="url(#rFront)"><rect x="570" y="130" width="280" height="250" fill="url(#gRf)" filter="url(#fStreakR)"/></g>
<g fill="none" stroke="#2a0a06">
<path d="M836 140L833 220L820 295" stroke-width="14" opacity=".3" filter="url(#b3)"/>
<path d="M690 240L692 345" stroke-width="9" opacity=".22" filter="url(#b3)"/>
<path d="M748 190L752 320" stroke-width="9" opacity=".22" filter="url(#b3)"/>
<path d="M560 214L580 226L612 224L619 232L620 300" stroke-width="5" opacity=".35" filter="url(#b3)"/>
<path d="M625 300L622 370" stroke-width="8" opacity=".2" filter="url(#b3)"/>
</g>
</g>
</g>
</svg>
<!--/SCENE-->
<!--HUD-->
<div id="hud">
<div class="vl" style="left:24px;top:39px;font-size:7.4px;color:#bdbdbd;letter-spacing:.05px">[+] [Perspective] [Standard] [Clay]</div>
<div class="vs" style="left:55.2px;top:57.6px">Total</div>
<div class="vs" style="left:30px;top:67.8px">Polys:</div><div class="vs" style="left:54.3px;top:67.8px">6 588 374</div>
<div class="vs" style="left:30px;top:78px">Verts:</div><div class="vs" style="left:54.3px;top:78px">5 229 121</div>
<div class="vs" style="left:30px;top:97.2px">FPS:</div><div class="vs" style="left:54.8px;top:97.2px">16.925</div>
<div class="abs" style="left:467.2px;top:297.6px;width:56px;height:11.6px;background:#fff;border:.9px solid #3a3a3a;font-size:6.75px;line-height:10px;color:#333;padding-left:2.4px;white-space:nowrap">Pattern2D_3867</div>
<svg class="abs" style="left:0;top:0" width="1180" height="594" viewBox="0 0 1180 594">
<defs><linearGradient id="gCube" x1="0" y1="0" x2="1" y2="1"><stop offset="0" stop-color="#c4c4c4"/><stop offset="1" stop-color="#a8a8a8"/></linearGradient></defs>
<!-- viewcube -->
<g opacity=".92">
<ellipse cx="1013.6" cy="79" rx="20.4" ry="11.6" fill="none" stroke="#a6a8a4" stroke-width="3.4"/>
<ellipse cx="1013.6" cy="79" rx="18" ry="9.6" fill="#868686" opacity=".6"/>
<path d="M1001.6 60.2L1016.4 55.6L1026 61.4L1025 75.4L1011.6 82.4L1002.6 74.2Z" fill="#b6b6b6"/>
<path d="M1001.6 60.2L1016.4 55.6L1026 61.4L1011 66.6Z" fill="#bcbcbc"/>
<path d="M1001.6 60.2L1011 66.6L1011.6 82.4L1002.6 74.2Z" fill="#a6a6a6"/>
<path d="M1011 66.6L1026 61.4L1025 75.4L1011.6 82.4Z" fill="#b0b0b0"/>
<path d="M1009 60.4l4.6-1.2M1011.6 61.6l3-0.6" stroke="#8a8a8a" stroke-width=".9"/>
<path d="M1014 73.6l8.4-3.4M1014.4 76l6-2.6" stroke="#8c8c8c" stroke-width="1"/>
<path d="M1004.6 66.6l1.6 4" stroke="#8a8a8a" stroke-width=".9"/>
<path d="M990.6 84.2l4-1.8l-1 3.8zM1024.4 91.2l3-2.8l.8 3.4z" fill="#d4d4d4"/>
</g>
<!-- axis gizmo -->
<path d="M36.4 573.6V562.6" stroke="#1a1a78" stroke-width="1.2"/><path d="M36.4 573.6L52 567.6" stroke="#b04040" stroke-width="1"/><path d="M36.4 573.6L32.8 567.4" stroke="#3a8a3a" stroke-width=".8"/>
</svg>
<div class="abs" style="left:36.6px;top:556.4px;font-size:6.6px;font-weight:bold;color:#1a1a78;line-height:7px">z</div>
<div class="abs" style="left:29.4px;top:560.8px;font-size:6.8px;color:#3a8a3a;line-height:7px">y</div>
<div class="abs" style="left:50.4px;top:562.6px;font-size:6.6px;color:#b04040;line-height:7px">x</div>
</div>
<!--/HUD-->

<div id="panel"></div>
<!--PANEL-->
<svg id="panelsvg" class="abs" style="left:0;top:0" width="1180" height="594" viewBox="0 0 1180 594">
<rect x="1052" y="35.2" width="128" height=".9" fill="#dcdcdc"/>
<path d="M1051.4 55V590.2H1180" fill="none" stroke="#3a3a3a" stroke-width="1.2"/><path d="M1052.5 57V589.4" fill="none" stroke="#e4e4e2" stroke-width=".9"/>
<path d="M1168 54.8H1180" fill="none" stroke="#2c2c2c" stroke-width="1.2"/>
<path d="M1052.4 56.2H1180" fill="none" stroke="#e0e0e0" stroke-width=".8"/>
<path d="M1051.9 55V41.6Q1051.9 39.4 1054.2 39.4H1067.0Q1069.3 39.4 1069.3 41.6V55Z" fill="#b8b8b8"/>
<path d="M1051.9 55.4V41.6Q1051.9 39.4 1054.2 39.4H1067.0Q1069.3 39.4 1069.3 41.6V55.4" fill="none" stroke="#262626" stroke-width="1.4"/>
<path d="M1051.9 55.2H1069.3" stroke="#a8a8a8" stroke-width=".8"/>
<path d="M1070.3 56.4V41.6Q1070.3 39.4 1072.6 39.4H1087.2Q1089.5 39.4 1089.5 41.6V56.4Z" fill="#d2d2d2"/>
<path d="M1070.3 55.4V41.6Q1070.3 39.4 1072.6 39.4H1087.2Q1089.5 39.4 1089.5 41.6V55.4" fill="none" stroke="#262626" stroke-width="1.4"/>
<path d="M1090.5 55V41.6Q1090.5 39.4 1092.8 39.4H1106.5Q1108.8 39.4 1108.8 41.6V55Z" fill="#b8b8b8"/>
<path d="M1090.5 55.4V41.6Q1090.5 39.4 1092.8 39.4H1106.5Q1108.8 39.4 1108.8 41.6V55.4" fill="none" stroke="#262626" stroke-width="1.4"/>
<path d="M1090.5 55.2H1108.8" stroke="#a8a8a8" stroke-width=".8"/>
<path d="M1109.8 55V41.6Q1109.8 39.4 1112.1 39.4H1126.0Q1128.3 39.4 1128.3 41.6V55Z" fill="#b8b8b8"/>
<path d="M1109.8 55.4V41.6Q1109.8 39.4 1112.1 39.4H1126.0Q1128.3 39.4 1128.3 41.6V55.4" fill="none" stroke="#262626" stroke-width="1.4"/>
<path d="M1109.8 55.2H1128.3" stroke="#a8a8a8" stroke-width=".8"/>
<path d="M1129.3 55V41.6Q1129.3 39.4 1131.6 39.4H1145.9Q1148.2 39.4 1148.2 41.6V55Z" fill="#b8b8b8"/>
<path d="M1129.3 55.4V41.6Q1129.3 39.4 1131.6 39.4H1145.9Q1148.2 39.4 1148.2 41.6V55.4" fill="none" stroke="#262626" stroke-width="1.4"/>
<path d="M1129.3 55.2H1148.2" stroke="#a8a8a8" stroke-width=".8"/>
<path d="M1149.2 55V41.6Q1149.2 39.4 1151.5 39.4H1165.2Q1167.5 39.4 1167.5 41.6V55Z" fill="#b8b8b8"/>
<path d="M1149.2 55.4V41.6Q1149.2 39.4 1151.5 39.4H1165.2Q1167.5 39.4 1167.5 41.6V55.4" fill="none" stroke="#262626" stroke-width="1.4"/>
<path d="M1149.2 55.2H1167.5" stroke="#a8a8a8" stroke-width=".8"/>
<path d="M1056 48H1065M1060.5 43.5V52.5" stroke="#686868" stroke-width="1.1"/>
<rect x="1076" y="43.6" width="8.6" height="8.2" fill="none" stroke="#18a088" stroke-width=".9"/><g fill="#18a088"><rect x="1075.2" y="42.8" width="1.6" height="1.6"/><rect x="1083.8" y="42.8" width="1.6" height="1.6"/><rect x="1075.2" y="51" width="1.6" height="1.6"/><rect x="1083.8" y="51" width="1.6" height="1.6"/></g><path d="M1077.2 51.6C1077.4 47.4 1079.6 45 1083.8 44.8" fill="none" stroke="#333" stroke-width="1.2"/>
<g fill="#787878"><rect x="1095.6" y="43.4" width="8.4" height="2.6"/><rect x="1095.6" y="47.6" width="2.2" height="1.6"/><rect x="1101.8" y="47.6" width="2.2" height="1.6"/><rect x="1098.8" y="49.6" width="2.2" height="1.2"/><rect x="1095.6" y="51" width="2.2" height="1.6"/><rect x="1101.8" y="51" width="2.2" height="1.6"/></g>
<circle cx="1121.3" cy="47.6" r="4" fill="#7a7a7a"/>
<rect x="1135" y="44" width="9.2" height="4.8" fill="#787878"/><rect x="1137.4" y="50.8" width="4.4" height=".9" fill="#787878"/>
<path d="M1156.6 45.6L1163 51.6" stroke="#6e6e6e" stroke-width="1.5" stroke-linecap="round"/><path d="M1154.6 43.4a2.2 2.2 0 1 0 3.4 2.6" fill="none" stroke="#6e6e6e" stroke-width="1.3"/>
<rect x="1055" y="60.8" width="107" height="10.8" fill="#b3b3b3"/><rect x="1055" y="60.8" width="107" height=".7" fill="#a4a4a4"/>
<rect x="1166.6" y="60" width="9.6" height="12.6" fill="#f0f0d4"/><path d="M1166.6 72.6H1176.2V60" fill="none" stroke="#9c9c84" stroke-width=".8"/>
<rect x="1054.4" y="79.3" width="122.8" height="10.9" fill="#fdfdfd"/><path d="M1169.6 83.6h3.6l-1.8 2.6z" fill="#111"/>
<rect x="1055.7" y="98.7" width="57.6" height="10" rx="1.4" fill="#bbbbbb"/><rect x="1117" y="98.7" width="57.7" height="10" rx="1.4" fill="#bbbbbb"/>
<rect x="1055.7" y="112.7" width="57.6" height="10" rx="1.4" fill="#bbbbbb"/><rect x="1117" y="112.7" width="57.7" height="10" rx="1.4" fill="#bbbbbb"/>
<rect x="1055.7" y="126.6" width="57.6" height="10" rx="1.4" fill="#bbbbbb"/><rect x="1117" y="126.6" width="57.7" height="10" rx="1.4" fill="#bbbbbb"/>
<rect x="1055.7" y="140.5" width="57.6" height="10" rx="1.4" fill="#bbbbbb"/><rect x="1117" y="140.5" width="57.7" height="10" rx="1.4" fill="#bbbbbb"/>
<rect x="1055.7" y="154.5" width="57.6" height="10" rx="1.4" fill="#bbbbbb"/><rect x="1117" y="154.5" width="57.7" height="10" rx="1.4" fill="#bbbbbb"/>
<rect x="1054.7" y="170.6" width="123" height="80.4" fill="#cecece"/><path d="M1054.7 251V170.6H1177.7" fill="none" stroke="#8c8c8c" stroke-width=".9"/><path d="M1054.7 251H1177.7V170.6" fill="none" stroke="#f0f0f0" stroke-width=".9"/>
<g transform="translate(1060.8 262.4) rotate(45)"><rect x="-1.6" y="-4.4" width="3.2" height="4.2" fill="#5a5a5a"/><rect x="-2.6" y="-.6" width="5.2" height="1.4" fill="#5a5a5a"/><rect x="-.4" y=".8" width=".8" height="4" fill="#5a5a5a"/></g>
<rect x="1072.5" y="257.4" width=".9" height="10" fill="#8a8a8a"/>
<rect x="1093.8999999999999" y="257.4" width=".9" height="10" fill="#8a8a8a"/>
<rect x="1131.1" y="257.4" width=".9" height="10" fill="#8a8a8a"/>
<rect x="1076.6" y="256" width="13.9" height="12.8" rx="1.2" fill="#f6a016"/><path d="M1083.6 258.2V266.6M1082 258.2h3.2M1082 266.6h3.2" stroke="#3a2a10" stroke-width="1.5"/>
<g fill="#606060"><circle cx="1102.6" cy="259.6" r="1.5"/><circle cx="1106.8" cy="261.2" r="1.9"/><circle cx="1104" cy="264.6" r="1.7"/><circle cx="1108" cy="265" r="1.9"/></g>
<g fill="#6a6a6a"><rect x="1117" y="259.4" width="6.4" height="1.1"/><rect x="1119" y="258.2" width="2.4" height="1.2"/><path d="M1117.6 261.2h5.2l-.5 6h-4.2z"/></g>
<rect x="1138.4" y="258.6" width="7" height="8" fill="#e8e0b0" stroke="#4a4a4a" stroke-width=".9"/><path d="M1140 261h3.6M1140 263h3.6M1140 265h2" stroke="#4a4a4a" stroke-width=".6"/><path d="M1143.2 261.8l3.6-4.2l1 .9l-3.6 4.2z" fill="#e89a1c" stroke="#5a4008" stroke-width=".4"/>
<rect x="1056.4" y="280" width="117.6" height=".9" fill="#f2f2f2"/><rect x="1110.8" y="279.4" width="10" height="2" fill="#c9c9c9"/><path d="M1111.4 280.4H1120.4" stroke="#8c8c8c" stroke-width="1" stroke-dasharray="1 .8"/>
<rect x="1175.2" y="284" width="2" height="299" rx="1" fill="#444"/>
</svg>
<div class="abs" style="left:1056px;top:80.1px;height:10.9px;line-height:10.9px;font-size:6.9px;color:#222;white-space:nowrap">Modifier List</div>
<div class="pbtn" style="left:1055.7px;top:98.7px;width:57.6px">Edit Poly</div><div class="pbtn" style="left:1117px;top:98.7px;width:57.7px">Edit Spline</div>
<div class="pbtn" style="left:1055.7px;top:112.7px;width:57.6px">Edit Mesh</div><div class="pbtn" style="left:1117px;top:112.7px;width:57.7px">Extrude</div>
<div class="pbtn" style="left:1055.7px;top:126.6px;width:57.6px">FFD 4x4x4</div><div class="pbtn" style="left:1117px;top:126.6px;width:57.7px">Sweep</div>
<div class="pbtn" style="left:1055.7px;top:140.5px;width:57.6px">UVW Map</div><div class="pbtn" style="left:1117px;top:140.5px;width:57.7px">FloorGenerator</div>
<div class="pbtn" style="left:1055.7px;top:154.5px;width:57.6px">amera Resolution Mc</div><div class="pbtn" style="left:1117px;top:154.5px;width:57.7px">Chamfer</div>
<!--/PANEL-->

</div>
</body>
</html>
